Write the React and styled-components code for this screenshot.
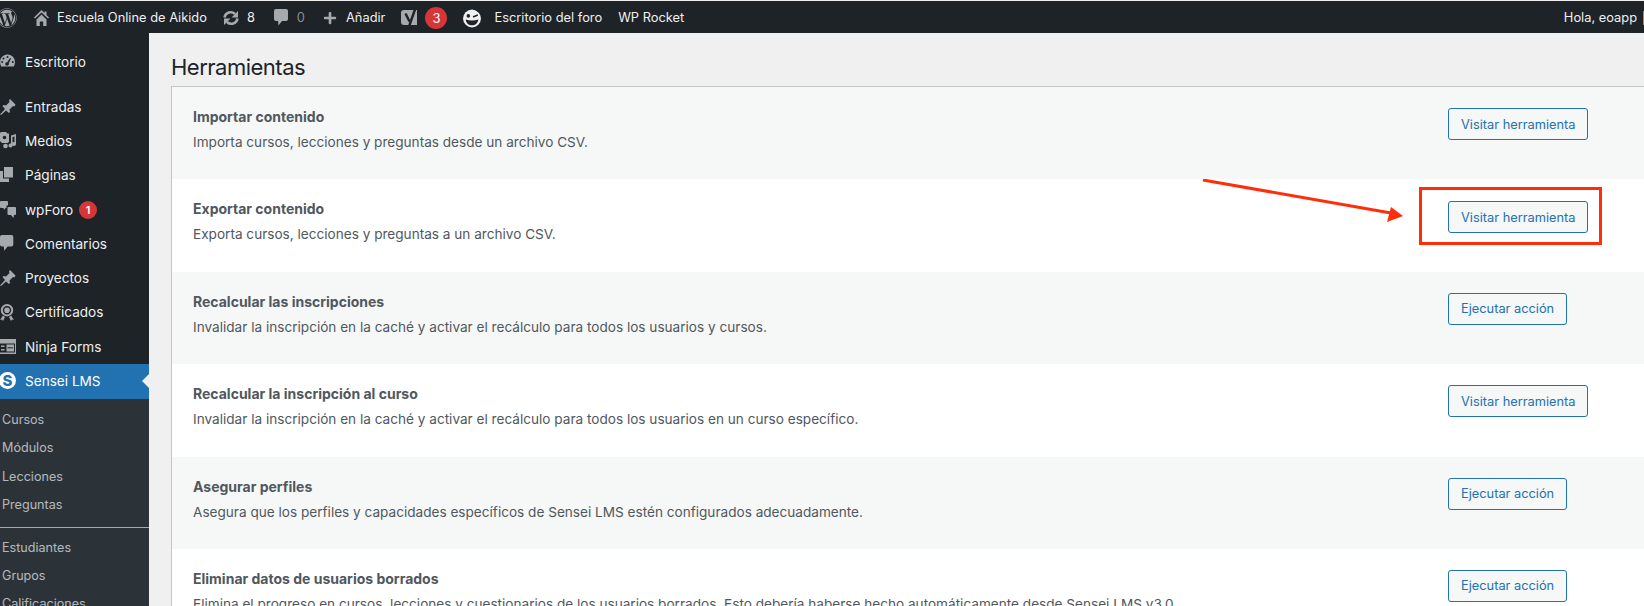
import React from 'react';
import styled, { createGlobalStyle } from 'styled-components';
import { FaWordpress, FaPlus } from 'react-icons/fa';

const GlobalStyle = createGlobalStyle`
  html, body {
    margin: 0;
    padding: 0;
    height: 606px;
    overflow: hidden;
    background: #f0f0f1;
    font-family: Inter, "Liberation Sans", sans-serif;
  }
`;

const BUBBLE = 'M2 0h10a2 2 0 0 1 2 2v8a2 2 0 0 1-2 2H8l-3.500 4.500L4 12H2a2 2 0 0 1-2-2V2a2 2 0 0 1 2-2z';
const PIN = 'M15.500 6.500 10 1 9 2.500l.5 1.500L6 7.500 3.500 7 2.500 8l2.500 3L0 16.500 1 17l5-4.500 3 2.500 1-1-.5-2.500 3.500-3.500 1.500.5z';

const glyphs = {
  gauge: (
    <>
      <path d="M7 1.500A7.500 7.500 0 0 0 0 9c0 1.600.4 3 1.200 4.500h12.600C14.600 12 15 10.600 15 9a7.500 7.500 0 0 0-8-7.500z" />
      <g fill="#1d2327">
        <circle cx="7.500" cy="4" r="1" />
        <circle cx="3.500" cy="5.500" r="1" />
        <circle cx="2.200" cy="9" r="1" />
        <circle cx="12.800" cy="9" r="1" />
        <circle cx="7" cy="11" r="1.800" />
        <path d="M6 11l4-6 1 .6-3 6.400z" />
      </g>
    </>
  ),
  pin: <path d={PIN} />,
  media: (
    <>
      <path d="M1 0h5l1.500 1.500H9v8.500L7.500 11H2L0 9V1z" />
      <circle cx="4.500" cy="5.500" r="1.800" fill="#1d2327" />
      <circle cx="5.500" cy="14" r="2.300" />
      <path d="M11 3.500l5-1.500v10a2 2 0 1 1-1.500-1.900V4.500l-2 .6v8.400a2 2 0 1 1-1.500-1.900z" />
    </>
  ),
  pages: (
    <>
      <path d="M4 0h9v10.500H4z" />
      <path d="M0 4h3v7.500h6V15H0z" />
    </>
  ),
  forum: (
    <>
      <path d="M1 0h6a1 1 0 0 1 1 1v3.500H6.500V7H5.500L4 9 3.500 7H1a1 1 0 0 1-1-1V1a1 1 0 0 1 1-1z" />
      <path d="M8.500 6H15a1 1 0 0 1 1 1v6a1 1 0 0 1-1 1h-1l-.5 3-2.500-3H8.500a1 1 0 0 1-1-1V7a1 1 0 0 1 1-1z" />
    </>
  ),
  bubble: <path d={BUBBLE} transform="scale(0.95)" />,
  award: (
    <>
      <path fillRule="evenodd" d="M7 0a6.200 6.200 0 1 1 0 12.400A6.200 6.200 0 0 1 7 0zm0 2a4.200 4.200 0 1 0 0 8.400A4.200 4.200 0 0 0 7 2z" />
      <circle cx="7" cy="6.200" r="2.800" />
      <path d="M3 11.500l2 1.500-2 4-1-1.500-2 .5zM11 11.500l-2 1.500 2 4 1-1.500 2 .5z" />
    </>
  ),
  forms: (
    <>
      <path d="M0 1h16v15H0z" />
      <path fill="#1d2327" d="M0 5.500h15v9H0z" />
      <path d="M1 7.500h3.500V9H1zM1 11h3.500v1.500H1zM6.500 6.500H14V13.500H6.500z" />
      <path fill="#1d2327" d="M7.500 9.300h5.500v1H7.500z" />
    </>
  ),
};

const HomeIcon = () => (
  <svg width="15" height="16" viewBox="0 0 15 16" fill="currentColor">
    <path d="M7.500 0L0 7.500 1 8.500 7.500 2.500 14 8.500 15 7.500 12.500 5V1.500h-2v1.500z" />
    <path d="M2.500 9.500L7.500 4.500 12.500 9.500V16H9.200v-4.500H5.800V16H2.500z" />
  </svg>
);

const SyncIcon = () => (
  <svg width="18" height="16" viewBox="0 0 18 16" fill="none" stroke="currentColor" strokeWidth="2.500">
    <path d="M2.500 7.500A6.200 6.200 0 0 1 13 4" />
    <path d="M15.500 8.500A6.200 6.200 0 0 1 5 12" />
    <path fill="currentColor" stroke="none" d="M16 1v6.500h-6.500zM2 15V8.500h6.500z" />
  </svg>
);

const CommentIcon = () => (
  <svg width="14" height="17" viewBox="0 0 14 17" fill="currentColor">
    <path d={BUBBLE} />
  </svg>
);

const YoastIcon = () => (
  <svg width="18" height="21" viewBox="0 0 18 21">
    <path fill="#a7aaad" d="M3 3h13v15H3a3 3 0 0 1-3-3V6a3 3 0 0 1 3-3z" />
    <path d="M4.500 6.500l4 8M14.500 1L8 19.500" stroke="#1d2327" strokeWidth="2.400" fill="none" />
  </svg>
);

const WinkIcon = () => (
  <svg width="20" height="20" viewBox="0 0 19 19">
    <circle cx="9.500" cy="10" r="8.500" fill="#f0f0f1" />
    <circle cx="6" cy="7.500" r="1.700" fill="#1d2327" />
    <path d="M10.500 8.500l4.500-1.800" stroke="#1d2327" strokeWidth="1.500" />
    <path d="M3.500 11c3.500 1.200 8.500 1.200 12 0-.5 3.800-3 5.500-6 5.500s-5.500-1.700-6-5.500z" fill="#1d2327" />
    <path d="M11 1c2 0 4 1 5.500 3" stroke="#1d2327" strokeWidth="1.500" fill="none" />
  </svg>
);

const menuItems = [
  { text: 'Entradas', icon: 'pin' },
  { text: 'Medios', icon: 'media' },
  { text: 'Páginas', icon: 'pages' },
  { text: 'wpForo', icon: 'forum', badge: 1 },
  { text: 'Comentarios', icon: 'bubble' },
  { text: 'Proyectos', icon: 'pin' },
  { text: 'Certificados', icon: 'award' },
  { text: 'Ninja Forms', icon: 'forms' },
];

const subItems = ['Cursos', 'Módulos', 'Lecciones', 'Preguntas'];
const subItems2 = ['Estudiantes', 'Grupos', 'Calificaciones'];

const tools = [
  {
    title: 'Importar contenido',
    text: 'Importa cursos, lecciones y preguntas desde un archivo CSV.',
    action: 'Visitar herramienta',
  },
  {
    title: 'Exportar contenido',
    text: 'Exporta cursos, lecciones y preguntas a un archivo CSV.',
    action: 'Visitar herramienta',
    marked: true,
  },
  {
    title: 'Recalcular las inscripciones',
    text: 'Invalidar la inscripción en la caché y activar el recálculo para todos los usuarios y cursos.',
    action: 'Ejecutar acción',
  },
  {
    title: 'Recalcular la inscripción al curso',
    text: 'Invalidar la inscripción en la caché y activar el recálculo para todos los usuarios en un curso específico.',
    action: 'Visitar herramienta',
  },
  {
    title: 'Asegurar perfiles',
    text: 'Asegura que los perfiles y capacidades específicos de Sensei LMS estén configurados adecuadamente.',
    action: 'Ejecutar acción',
  },
  {
    title: 'Eliminar datos de usuarios borrados',
    text: 'Elimina el progreso en cursos, lecciones y cuestionarios de los usuarios borrados. Esto debería haberse hecho automáticamente desde Sensei LMS v3.0.',
    action: 'Ejecutar acción',
  },
];

export default function App() {
  return (
    <Page>
      <GlobalStyle />
      <TopBar>
        <BarLeft>
          <WpMark><FaWordpress size={20} /></WpMark>
          <BarIcon $w={23}><HomeIcon /></BarIcon>
          <BarText $mr={15}>Escuela Online de Aikido</BarText>
          <BarIcon $w={25}><SyncIcon /></BarIcon>
          <BarText $mr={19}>8</BarText>
          <BarIcon $w={23}><CommentIcon /></BarIcon>
          <BarText $mr={18} $dim>0</BarText>
          <BarIcon $w={23}><FaPlus size={14} /></BarIcon>
          <BarText $mr={16}>Añadir</BarText>
          <BarIcon $w={24}><YoastIcon /></BarIcon>
          <BarBadge>3</BarBadge>
          <BarIcon $w={32}><WinkIcon /></BarIcon>
          <BarText $mr={16}>Escritorio del foro</BarText>
          <BarText>WP Rocket</BarText>
        </BarLeft>
        <BarRight>
          <BarText>Hola, eoapp</BarText>
          <AvatarEdge />
        </BarRight>
      </TopBar>
      <Body>
        <Sidebar>
          <TopItem>
            <MenuIcon viewBox="0 0 17 17" fill="currentColor">{glyphs.gauge}</MenuIcon>
            Escritorio
          </TopItem>
          <div>
            {menuItems.map((item) => (
              <MenuItem key={item.text}>
                <MenuIcon viewBox="0 0 17 17" fill="currentColor">{glyphs[item.icon]}</MenuIcon>
                {item.text}
                {item.badge && <MenuBadge>{item.badge}</MenuBadge>}
              </MenuItem>
            ))}
            <MenuItem $active>
              <SenseiLogo>S</SenseiLogo>
              Sensei LMS
              <ActiveNotch />
            </MenuItem>
          </div>
          <SubMenu>
            {subItems.map((text) => (
              <SubItem key={text}>{text}</SubItem>
            ))}
            <SubDivider />
            {subItems2.map((text) => (
              <SubItem key={text}>{text}</SubItem>
            ))}
          </SubMenu>
        </Sidebar>
        <Content>
          <Title>Herramientas</Title>
          <Card>
            {tools.map((tool, i) => (
              <ToolRow key={tool.title} $odd={i % 2 === 0}>
                <div>
                  <ToolTitle>{tool.title}</ToolTitle>
                  <ToolText>{tool.text}</ToolText>
                </div>
                <ActionCell $marked={tool.marked}>
                  <ActionButton>{tool.action}</ActionButton>
                  {tool.marked && <Highlight />}
                </ActionCell>
                {tool.marked && (
                  <Arrow width="204" height="46" viewBox="0 0 204 46">
                    <path d="M1 1L189 34" stroke="#ff2e0a" strokeWidth="3" />
                    <path d="M201 37L189 28L185 43z" fill="#ff2e0a" />
                  </Arrow>
                )}
              </ToolRow>
            ))}
          </Card>
        </Content>
      </Body>
    </Page>
  );
}

const Page = styled.div`
  height: 606px;
  overflow: hidden;
  display: flex;
  flex-direction: column;
`;

const TopBar = styled.header`
  height: 32px;
  margin-top: 1px;
  flex: none;
  box-sizing: border-box;
  padding-top: 1px;
  background: #1d2327;
  color: #f0f0f1;
  display: flex;
  align-items: center;
  justify-content: space-between;
  font-size: 12.850px;
`;

const BarLeft = styled.div`
  display: flex;
  align-items: center;
`;

const BarRight = styled.div`
  display: flex;
  align-items: center;
`;

const AvatarEdge = styled.span`
  width: 1px;
  height: 14px;
  margin-left: 6px;
  background: #8c8f94;
`;

const WpMark = styled.span`
  width: 34px;
  margin-left: -3px;
  padding-right: 3px;
  box-sizing: content-box;
  display: flex;
  align-items: center;
  color: #a7aaad;
`;

const BarIcon = styled.span`
  width: ${(p) => p.$w}px;
  display: flex;
  align-items: center;
  color: #a7aaad;
`;

const BarText = styled.span`
  margin-right: ${(p) => p.$mr || 0}px;
  color: ${(p) => (p.$dim ? '#8c8f94' : '#f0f0f1')};
  white-space: nowrap;
`;

const BarBadge = styled.span`
  width: 22px;
  height: 22px;
  margin-right: 15px;
  border-radius: 50%;
  background: #d63638;
  color: #fff;
  font-size: 13px;
  display: flex;
  align-items: center;
  justify-content: center;
`;

const Body = styled.div`
  flex: 1;
  display: flex;
  min-height: 0;
`;

const Sidebar = styled.aside`
  width: 149px;
  flex: none;
  background: #1d2327;
  color: #f0f0f1;
  font-size: 13.600px;
`;

const TopItem = styled.div`
  height: 34px;
  margin-top: 12px;
  margin-bottom: 11px;
  box-sizing: border-box;
  padding-left: 25px;
  display: flex;
  align-items: center;
  position: relative;
`;

const MenuItem = styled.div`
  height: 34.300px;
  box-sizing: border-box;
  padding: 0 0 1px 25px;
  display: flex;
  align-items: center;
  position: relative;
  background: ${(p) => (p.$active ? '#2271b1' : 'transparent')};
  color: ${(p) => (p.$active ? '#fff' : '#f0f0f1')};
`;

const MenuIcon = styled.svg`
  position: absolute;
  left: 0;
  top: 8px;
  width: 17px;
  height: 17px;
  color: #a7aaad;
`;

const MenuBadge = styled.span`
  width: 18px;
  height: 18px;
  margin-left: 6px;
  border-radius: 50%;
  background: #d63638;
  color: #fff;
  font-size: 11px;
  font-weight: 600;
  display: flex;
  align-items: center;
  justify-content: center;
`;

const SenseiLogo = styled.span`
  position: absolute;
  left: -1px;
  top: 8px;
  width: 17px;
  height: 17px;
  border-radius: 50%;
  background: #fff;
  color: #2271b1;
  font-size: 15px;
  font-weight: 800;
  display: flex;
  align-items: center;
  justify-content: center;
`;

const ActiveNotch = styled.span`
  position: absolute;
  right: 0;
  top: 10px;
  border: 7px solid transparent;
  border-right-color: #f0f0f1;
  border-left-width: 0;
`;

const SubMenu = styled.div`
  background: #2c3338;
  padding-top: 7px;
  color: rgba(240, 246, 252, 0.7);
  font-size: 12.600px;
`;

const SubItem = styled.div`
  height: 28.200px;
  padding-left: 2px;
  display: flex;
  align-items: center;
`;

const SubDivider = styled.div`
  height: 1px;
  margin: 9px 0 5px;
  background: #a7aaad;
`;

const Content = styled.main`
  flex: 1;
  min-width: 0;
  padding-left: 22px;
`;

const Title = styled.h1`
  margin: 20px 0 0;
  height: 33px;
  line-height: 28px;
  font-size: 22px;
  letter-spacing: -0.500px;
  font-weight: 400;
  color: #1d2327;
`;

const Card = styled.section`
  border-top: 1px solid #c3c4c7;
  border-left: 1px solid #c3c4c7;
`;

const ToolRow = styled.div`
  height: 92.400px;
  box-sizing: border-box;
  padding: 19px 0 0 21px;
  display: grid;
  grid-template-columns: 1fr 196px;
  position: relative;
  background: ${(p) => (p.$odd ? '#f6f7f7' : '#fff')};
`;

const ToolTitle = styled.div`
  font-size: 14px;
  line-height: 22px;
  font-weight: 700;
  color: #50575e;
  margin-bottom: 3px;
`;

const ToolText = styled.div`
  font-size: 13.600px;
  line-height: 22px;
  color: #50575e;
`;

const ActionCell = styled.div`
  position: relative;
  justify-self: start;
  align-self: start;
  margin-top: ${(p) => (p.$marked ? 3 : 2)}px;
`;

const ActionButton = styled.button`
  display: block;
  height: 32px;
  padding: 0 12px;
  box-sizing: border-box;
  border: 1px solid #2271b1;
  border-radius: 3px;
  background: #f6f7f7;
  color: #2271b1;
  font-family: inherit;
  font-size: 12.800px;
  white-space: nowrap;
`;

const Highlight = styled.span`
  position: absolute;
  left: -29px;
  right: -14px;
  top: -14px;
  bottom: -12px;
  border: 3px solid #ff2e0a;
  box-sizing: border-box;
`;

const Arrow = styled.svg`
  position: absolute;
  left: 1030px;
  top: 0;
`;
